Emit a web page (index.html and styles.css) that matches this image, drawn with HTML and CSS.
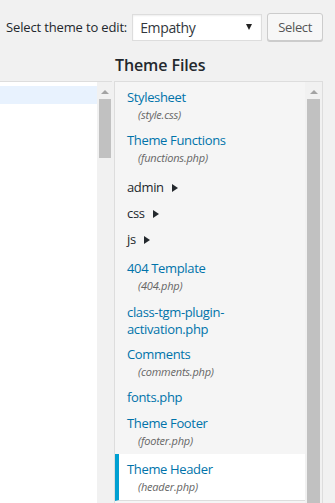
FILE: index.html
```html
<!DOCTYPE html>
<html lang="en">
<head>
    <meta charset="UTF-8">
    <meta name="viewport" content="width=device-width, initial-scale=1.0">
    <title>Edit Themes</title>
    <link rel="stylesheet" href="styles.css">
</head>
<body>

<div class="theme-select">
    <label for="theme">Select theme to edit:</label>
    <div class="select-box" id="theme">
        <span>Empathy</span>
        <span class="select-arrow"></span>
    </div>
    <button class="button">Select</button>
</div>

<h2 class="files-title">Theme Files</h2>

<div class="editor">
    <div class="code">
        <div class="code-lines">
            <div class="active-line"></div>
        </div>
        <div class="scrollbar">
            <span class="scroll-up"></span>
            <span class="thumb thumb-short"></span>
        </div>
    </div>

    <div class="files">
        <ul class="file-list">
            <li><a href="#">Stylesheet</a><span class="file-name">(style.css)</span></li>
            <li><a href="#">Theme Functions</a><span class="file-name">(functions.php)</span></li>
            <li class="folders">
                <ul>
                    <li class="folder">admin <span class="folder-arrow"></span></li>
                    <li class="folder">css <span class="folder-arrow"></span></li>
                    <li class="folder">js <span class="folder-arrow"></span></li>
                </ul>
            </li>
            <li><a href="#">404 Template</a><span class="file-name">(404.php)</span></li>
            <li class="long-name"><a href="#">class-tgm-plugin-activation.php</a></li>
            <li><a href="#">Comments</a><span class="file-name">(comments.php)</span></li>
            <li><a href="#">fonts.php</a></li>
            <li><a href="#">Theme Footer</a><span class="file-name">(footer.php)</span></li>
            <li class="current-file"><a href="#">Theme Header</a><span class="file-name">(header.php)</span></li>
        </ul>
        <div class="scrollbar scrollbar-wide">
            <span class="scroll-up"></span>
            <span class="thumb thumb-long"></span>
        </div>
    </div>
</div>

</body>
</html>
```

FILE: styles.css
```css
body {
    font-family: 'Open Sans', 'Noto Sans', sans-serif;
    font-size: 13px;
    letter-spacing: -0.35px;
    margin: 0;
    padding: 0;
    background-color: #f1f1f1;
    color: #444;
    overflow: hidden;
    height: 503px;
}

.theme-select {
    display: flex;
    align-items: center;
    padding: 13px 0 0 6px;
    height: 28px;
}

.theme-select label {
    margin-right: 5px;
    letter-spacing: -0.15px;
    color: #23282d;
}

.select-box {
    display: flex;
    align-items: center;
    justify-content: space-between;
    padding: 0 7px;
    box-sizing: border-box;
    width: 130px;
    height: 27px;
    background-color: #fff;
    border: 1px solid #ddd;
    box-shadow: inset 0 1px 2px rgba(0, 0, 0, 0.07);
    font-size: 14px;
    color: #32373c;
}

.select-arrow {
    width: 0;
    height: 0;
    border-left: 3.5px solid transparent;
    border-right: 3.5px solid transparent;
    border-top: 6px solid #222;
    margin-right: 2px;
}

.button {
    margin-left: 5px;
    width: 56px;
    height: 28px;
    font-family: inherit;
    font-size: 13px;
    letter-spacing: inherit;
    color: #555;
    background-color: #f7f7f7;
    border: 1px solid #ccc;
    border-radius: 3px;
    box-shadow: 0 1px 0 #ccc;
    padding: 0;
}

.files-title {
    margin: 14px 0 6px;
    padding-left: 115px;
    font-size: 16px;
    line-height: 20px;
    font-weight: 600;
    letter-spacing: -0.1px;
    color: #23282d;
}

.editor {
    display: flex;
    height: 430px;
}

.code {
    width: 112px;
    display: flex;
    background-color: #fff;
    border-top: 1px solid #ddd;
}

.code-lines {
    flex: 1;
    padding-top: 4px;
}

.active-line {
    height: 18px;
    background-color: #e8f2fe;
}

.scrollbar {
    width: 15px;
    background-color: #f1f1f1;
    display: flex;
    flex-direction: column;
    align-items: center;
}

.scroll-up {
    margin-top: 8px;
    width: 0;
    height: 0;
    border-left: 4px solid transparent;
    border-right: 4px solid transparent;
    border-bottom: 4px solid #a3a3a3;
}

.thumb {
    margin-top: 5px;
    background-color: #c1c1c1;
}

.thumb-short {
    width: 12px;
    height: 59px;
    margin-left: 1px;
}

.files {
    margin-left: 2px;
    width: 207px;
    display: flex;
    background-color: #f5f5f5;
    border: 1px solid #ddd;
    border-bottom: none;
}

.file-list {
    flex: 1;
    list-style: none;
    margin: 0;
    padding: 3px 0 0;
}

.file-list li {
    padding: 4px 4px 5px 12px;
    line-height: 17px;
}

.file-list a {
    display: block;
    color: #0073aa;
    text-decoration: none;
}

.file-name {
    display: block;
    padding-left: 11px;
    font-size: 11px;
    font-style: italic;
    letter-spacing: -0.2px;
    color: #666;
}

.file-list .folders {
    padding: 4px 0 3px;
}

.folders ul {
    list-style: none;
    margin: 0;
    padding: 0;
}

.file-list .folder {
    color: #23282d;
}

.file-list .long-name {
    padding-top: 5px;
    padding-bottom: 4px;
}

.folder-arrow {
    display: inline-block;
    margin-left: 5px;
    width: 0;
    height: 0;
    border-top: 4px solid transparent;
    border-bottom: 4px solid transparent;
    border-left: 6px solid #23282d;
}

.file-list .current-file {
    padding: 7px 4px 5px 8px;
    background-color: #fff;
    border-left: 4px solid #00a0d2;
    border-bottom: 1px solid #ddd;
}

.scrollbar-wide {
    width: 17px;
}

.thumb-long {
    width: 13px;
    flex: 1;
}
```
